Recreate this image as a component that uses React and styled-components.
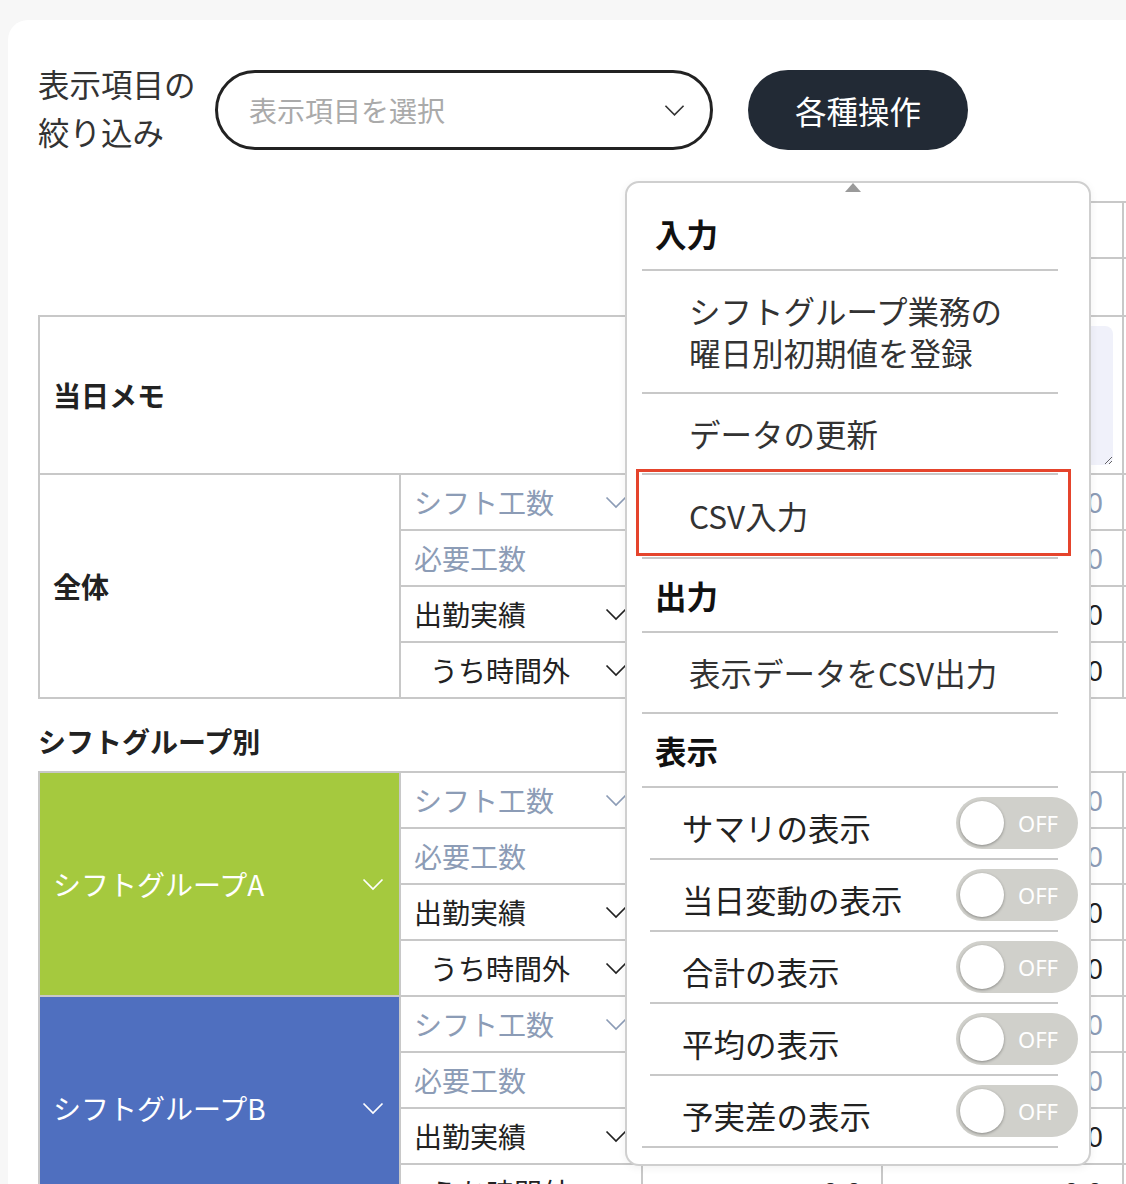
import React from 'react';
import styled, { createGlobalStyle } from 'styled-components';

const GlobalStyle = createGlobalStyle`
  html, body {
    margin: 0;
    padding: 0;
    background: #f7f7f7;
    overflow: hidden;
  }
  body {
    font-family: "Noto Sans CJK JP", "Noto Sans", sans-serif;
    color: #333;
  }
  * { box-sizing: border-box; }
`;

const LINE = '#c8c8c8';
const MUTED = '#8c9cb6';

const Card = styled.div`
  margin: 20px 0 0 8px;
  width: 1400px;
  min-height: 1300px;
  background: #fff;
  border-radius: 20px 0 0 0;
  padding: 50px 0 0 30px;
`;

const FilterRow = styled.div`
  display: flex;
  align-items: center;
  height: 80px;
`;

const FilterLabel = styled.div`
  flex: 0 0 177px;
  padding-bottom: 6px;
  font-size: 31.5px;
  line-height: 48px;
  color: #333;
`;

const SelectBox = styled.div`
  width: 498px;
  height: 80px;
  border: 3px solid #222;
  border-radius: 40px;
  display: flex;
  align-items: center;
  justify-content: space-between;
  padding: 0 25px 0 31px;
  font-size: 28px;
  color: #aaa;
`;

const ButtonWrap = styled.div`
  position: relative;
  margin-left: 35px;
`;

const ActionButton = styled.button`
  width: 220px;
  height: 80px;
  border: none;
  border-radius: 40px;
  background: #222a35;
  color: #fff;
  font-family: inherit;
  font-size: 31.5px;
  cursor: pointer;
`;

const ChevronIcon = styled.svg`
  flex: none;
  color: ${p => p.$color || '#333'};
`;

const Chevron = ({ color, w = 22 }) => (
  <ChevronIcon $color={color} width={w} height="13" viewBox="0 0 22 13">
    <polyline points="1.5,1.5 11,11 20.5,1.5" fill="none" stroke="currentColor" strokeWidth="1.7" />
  </ChevronIcon>
);

/* menu */

const Menu = styled.div`
  position: absolute;
  top: 111px;
  left: -123px;
  width: 466px;
  background: #fff;
  border: 2px solid #cfcfcf;
  border-radius: 14px;
  padding: 14px 31px 16px 15px;
  box-shadow: 0 2px 8px rgba(0, 0, 0, 0.06);
  z-index: 10;

  &::before {
    content: '';
    position: absolute;
    top: 0;
    left: 218px;
    border-left: 8px solid transparent;
    border-right: 8px solid transparent;
    border-bottom: 9px solid #9a9a9a;
  }
`;

const MenuHeader = styled.div`
  height: 74px;
  display: flex;
  align-items: center;
  padding-left: 13px;
  border-bottom: 2px solid ${LINE};
  font-size: 31.5px;
  font-weight: 700;
  color: #111;
`;

const MenuItem = styled.div`
  position: relative;
  padding: ${p => (p.$highlight ? '19px 0 21px 47px' : '18px 0 19px 47px')};
  line-height: 42px;
  font-size: 31.5px;
  color: #333;
  border-bottom: 2px solid ${LINE};

  ${p => p.$highlight && `
    &::after {
      content: '';
      position: absolute;
      top: -6px;
      left: -6px;
      right: -13px;
      bottom: 1px;
      border: 3px solid #e5442c;
    }
  `}
`;

const ToggleRow = styled.div`
  height: 72px;
  margin-left: ${p => (p.$last ? 0 : 8)}px;
  padding-left: ${p => (p.$last ? 40 : 32)}px;
  display: flex;
  align-items: center;
  justify-content: space-between;
  border-bottom: 2px solid ${LINE};
  font-size: 31.5px;
  color: #222;
`;

const ToggleLabel = styled.span`
  padding-top: 8px;
`;

const Toggle = styled.div`
  width: 122px;
  height: 52px;
  margin-right: -20px;
  border-radius: 26px;
  background: #d0d0cb;
  display: flex;
  align-items: center;
  justify-content: space-between;
  padding: 0 20px 0 4px;
`;

const Knob = styled.span`
  width: 44px;
  height: 44px;
  border-radius: 50%;
  background: #fff;
  box-shadow: 0 1px 3px rgba(0, 0, 0, 0.35);
`;

const ToggleText = styled.span`
  font-family: "Noto Sans", sans-serif;
  font-size: 22px;
  color: #fff;
`;

/* tables */

const Grid = styled.table`
  border-collapse: collapse;
  table-layout: fixed;
  width: 1324px;
  margin-top: ${p => p.$top || 0}px;
`;

const HeadBlank = styled.td`
  height: 56px;
  padding: 0;
`;

const HeadCell = styled.td`
  height: ${p => p.$h || 56}px;
  border: 2px solid ${LINE};
  padding: 0;
`;

const MemoLabel = styled.td`
  height: 158px;
  border: 2px solid ${LINE};
  padding: 0 13px;
  font-size: 28px;
  font-weight: 700;
  color: #222;
`;

const MemoCell = styled.td`
  border: 2px solid ${LINE};
  padding: 7px 9px 7px 8px;
  vertical-align: middle;
`;

const MemoArea = styled.textarea`
  display: block;
  width: 100%;
  height: 139px;
  border: none;
  border-radius: 8px;
  background: #f0f1fa;
  font-family: inherit;
`;

const GroupLabel = styled.td`
  border: 2px solid ${LINE};
  background: ${p => p.$bg || '#fff'};
  color: ${p => p.$color || '#222'};
  font-size: 28px;
  font-weight: ${p => (p.$bold ? 700 : 400)};
  padding: 0 15px 0 13px;
`;

const GroupInner = styled.div`
  display: flex;
  align-items: center;
  justify-content: space-between;
`;

const SubCell = styled.td`
  height: 56px;
  border: 2px solid ${LINE};
  padding: 0 14px 0 ${p => (p.$indent ? 29 : 13)}px;
  font-size: 28px;
  color: ${p => (p.$muted ? MUTED : '#222')};
`;

const SubInner = styled.div`
  display: flex;
  align-items: center;
  justify-content: space-between;
`;

const ValueCell = styled.td`
  border: 2px solid ${LINE};
  padding: 0 19px 0 0;
  text-align: right;
  font-family: "Noto Sans", sans-serif;
  font-size: 28px;
  color: ${p => (p.$muted ? MUTED : '#222')};
`;

const SectionTitle = styled.div`
  padding: 25px 0 13px;
  line-height: 34px;
  font-size: 28px;
  font-weight: 700;
  color: #222;
`;

const COLS = [361, 242, 240, 241, 240];

const Cols = () => (
  <colgroup>
    {COLS.map((w, i) => <col key={i} style={{ width: w }} />)}
  </colgroup>
);

const SUB_ROWS = [
  { label: 'シフト工数', muted: true, chevron: true },
  { label: '必要工数', muted: true, chevron: false },
  { label: '出勤実績', chevron: true },
  { label: 'うち時間外', indent: true, chevron: true },
];

const DATA_COLS = 3;

function BlockRows({ label, bg, color, bold, chevron }) {
  return SUB_ROWS.map((row, i) => (
    <tr key={i}>
      {i === 0 && (
        <GroupLabel rowSpan={4} $bg={bg} $color={color} $bold={bold}>
          <GroupInner>
            <span>{label}</span>
            {chevron && <Chevron color={color} />}
          </GroupInner>
        </GroupLabel>
      )}
      <SubCell $muted={row.muted} $indent={row.indent}>
        <SubInner>
          <span>{row.label}</span>
          {row.chevron && <Chevron color={row.muted ? MUTED : '#222'} />}
        </SubInner>
      </SubCell>
      {Array.from({ length: DATA_COLS }).map((_, j) => (
        <ValueCell key={j} $muted={row.muted}>0.0</ValueCell>
      ))}
    </tr>
  ));
}

const MENU_TOGGLES = ['サマリの表示', '当日変動の表示', '合計の表示', '平均の表示', '予実差の表示'];

function App() {
  return (
    <>
      <GlobalStyle />
      <Card>
        <FilterRow>
          <FilterLabel>表示項目の<br />絞り込み</FilterLabel>
          <SelectBox>
            <span>表示項目を選択</span>
            <Chevron color="#333" w={21} />
          </SelectBox>
          <ButtonWrap>
            <ActionButton>各種操作</ActionButton>
            <Menu>
              <MenuHeader>入力</MenuHeader>
              <MenuItem>シフトグループ業務の<br />曜日別初期値を登録</MenuItem>
              <MenuItem>データの更新</MenuItem>
              <MenuItem $highlight>CSV入力</MenuItem>
              <MenuHeader>出力</MenuHeader>
              <MenuItem>表示データをCSV出力</MenuItem>
              <MenuHeader>表示</MenuHeader>
              {MENU_TOGGLES.map((t, i) => (
                <ToggleRow key={t} $last={i === MENU_TOGGLES.length - 1}>
                  <ToggleLabel>{t}</ToggleLabel>
                  <Toggle>
                    <Knob />
                    <ToggleText>OFF</ToggleText>
                  </Toggle>
                </ToggleRow>
              ))}
            </Menu>
          </ButtonWrap>
        </FilterRow>

        <Grid $top={51}>
          <Cols />
          <tbody>
            <tr>
              <HeadBlank />
              <HeadBlank />
              {Array.from({ length: DATA_COLS }).map((_, j) => <HeadCell key={j} />)}
            </tr>
            <tr>
              <HeadBlank />
              <HeadBlank />
              {Array.from({ length: DATA_COLS }).map((_, j) => <HeadCell key={j} $h={58} />)}
            </tr>
            <tr>
              <MemoLabel colSpan={2}>当日メモ</MemoLabel>
              {Array.from({ length: DATA_COLS }).map((_, j) => (
                <MemoCell key={j}><MemoArea /></MemoCell>
              ))}
            </tr>
            <BlockRows label="全体" bold />
          </tbody>
        </Grid>

        <SectionTitle>シフトグループ別</SectionTitle>

        <Grid>
          <Cols />
          <tbody>
            <BlockRows label="シフトグループA" bg="#a5c93e" color="#fff" chevron />
            <BlockRows label="シフトグループB" bg="#4f6fbf" color="#fff" chevron />
          </tbody>
        </Grid>
      </Card>
    </>
  );
}

export default App;
